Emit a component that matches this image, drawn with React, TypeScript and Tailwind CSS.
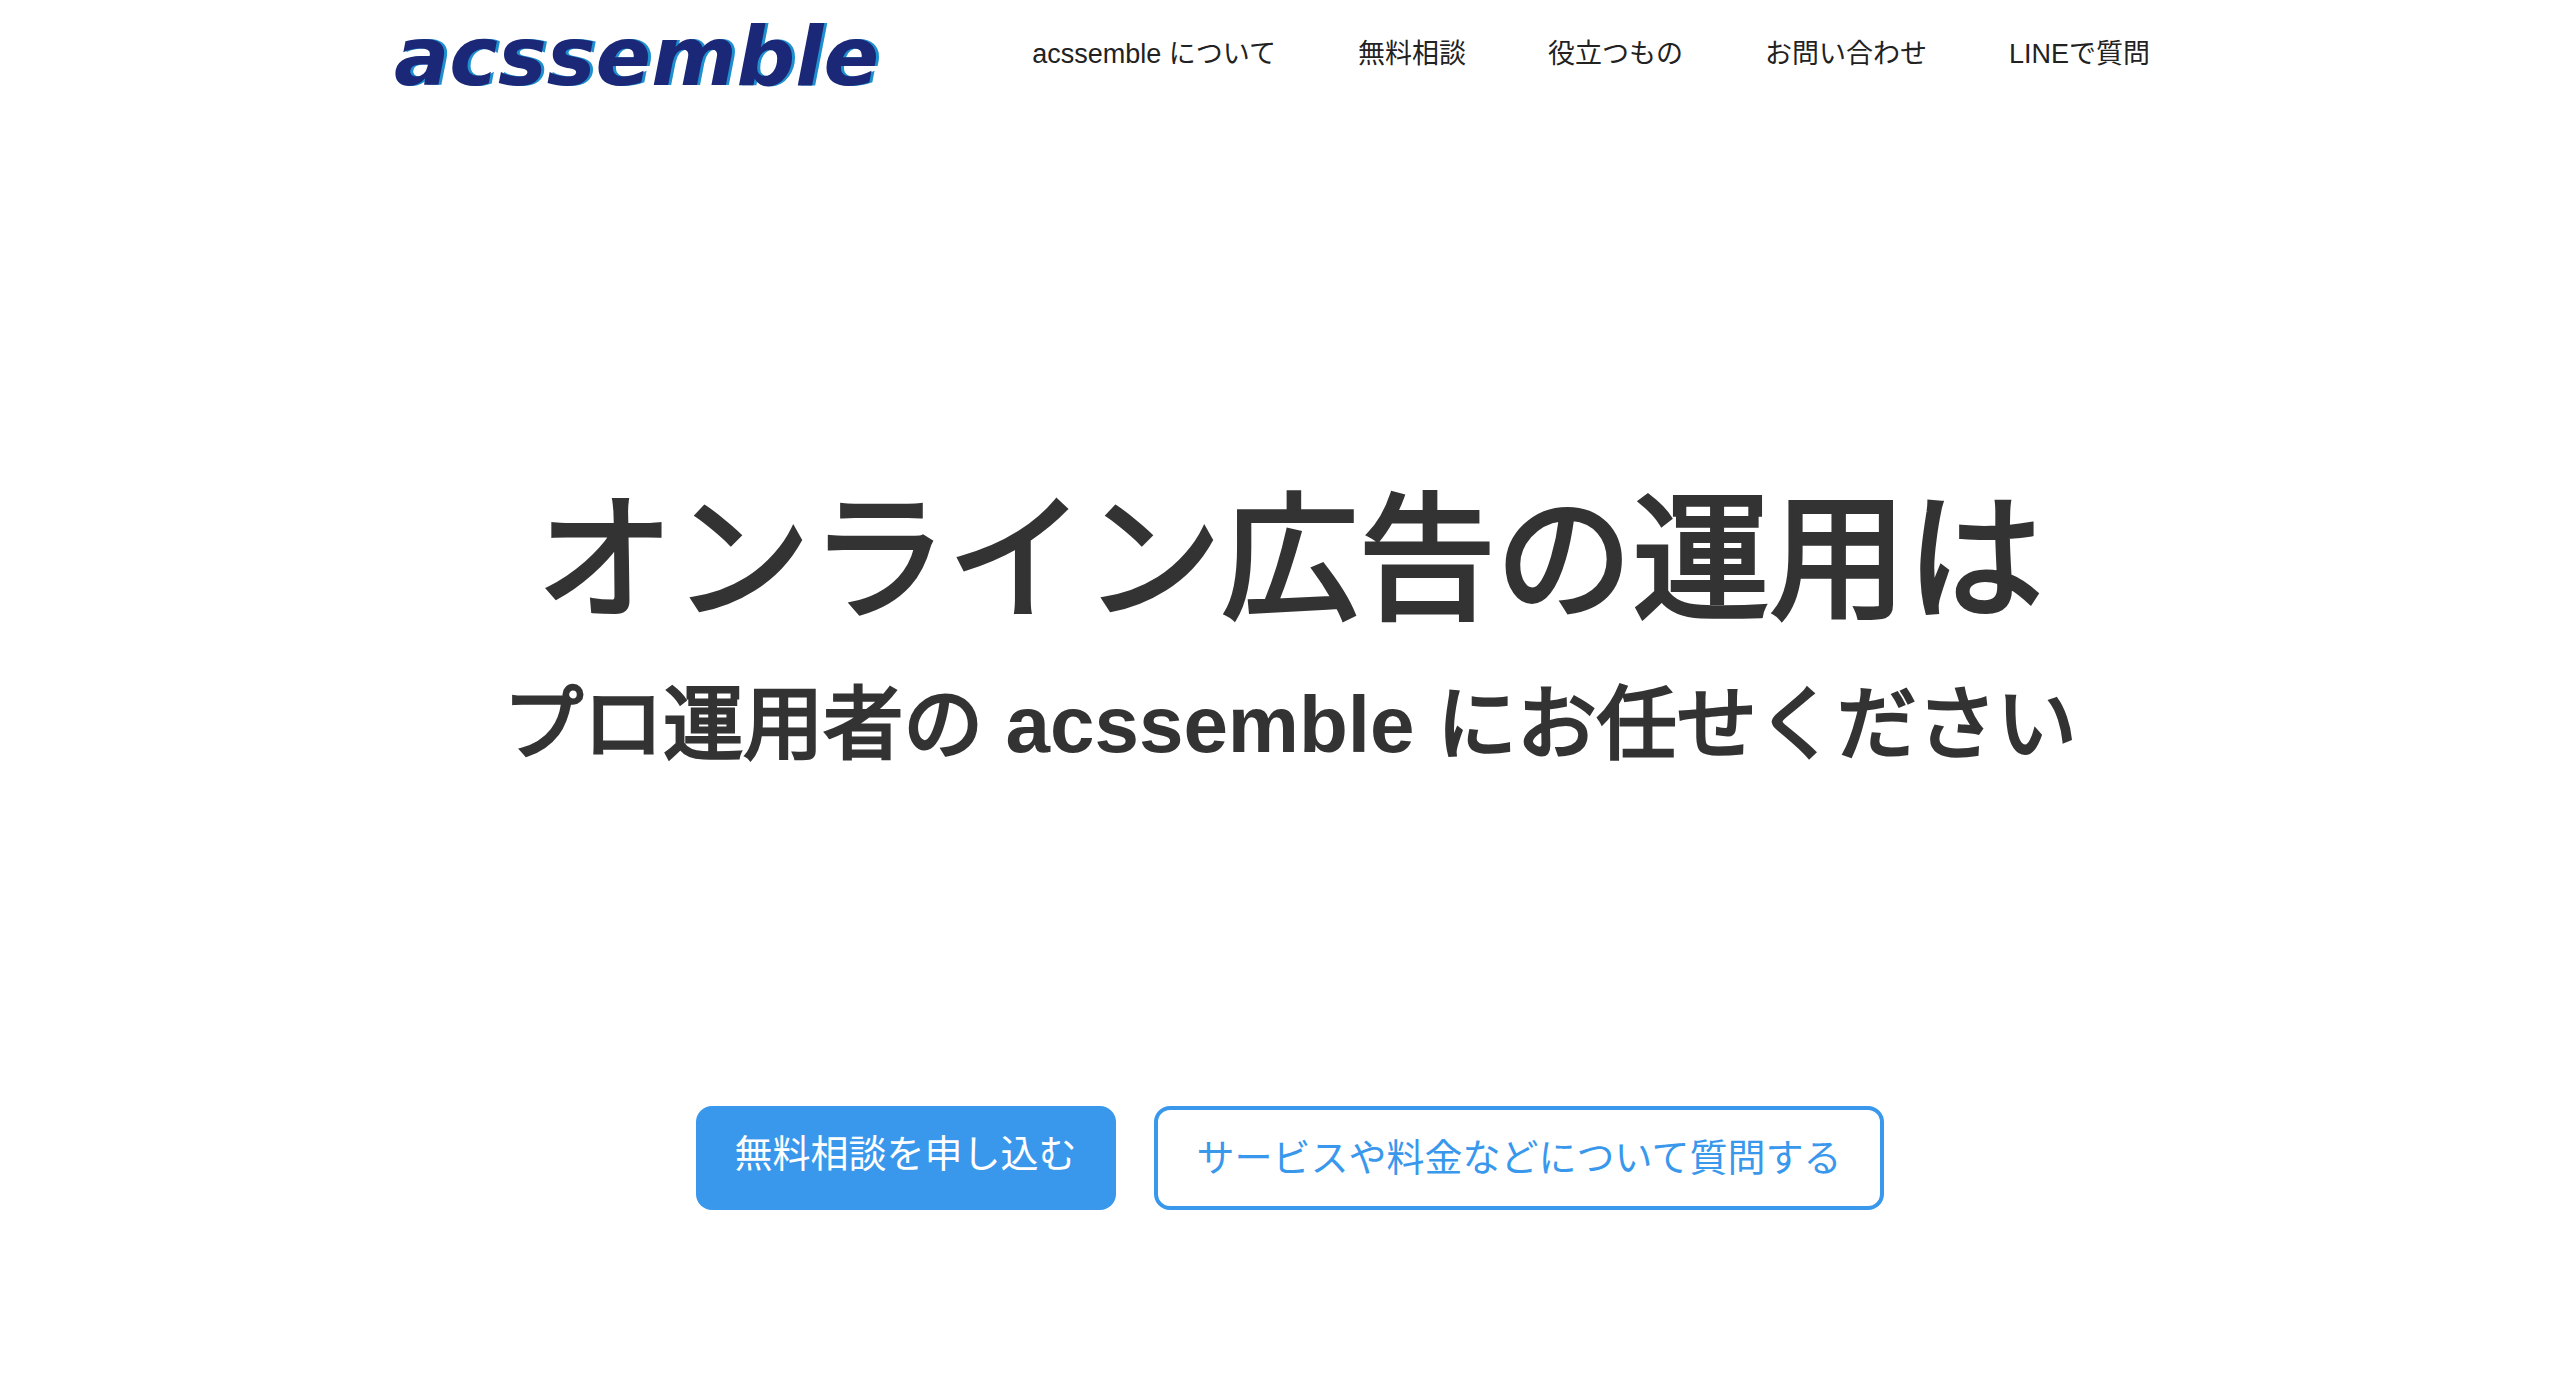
const navItems = ["acssemble について", "無料相談", "役立つもの", "お問い合わせ", "LINEで質問"];

export default function App() {
  return (
    <div className="min-h-screen bg-white font-['Liberation_Sans','Noto_Sans_CJK_JP',sans-serif] text-[#333333]">
      <header className="mx-auto flex w-full max-w-[1820px] items-center justify-between px-6 pr-10">
        <a
          href="#top"
          className="pt-1.5 font-['DejaVu_Sans',sans-serif] text-[82px] leading-[102px] font-bold text-[#1b2877] italic [text-shadow:3px_0_0_#1e90d0]"
        >
          acssemble
        </a>
        <nav aria-label="メイン">
          <ul className="flex gap-[82px] text-[27px] leading-[40px] whitespace-nowrap text-[#222222]">
            {navItems.map((item) => (
              <li key={item}>
                <a href="#menu">{item}</a>
              </li>
            ))}
          </ul>
        </nav>
      </header>
      <main id="top" className="flex flex-col items-center pt-[353px] pl-5">
        <h1 className="text-[137px] leading-[200px] font-normal whitespace-nowrap [-webkit-text-stroke:4px_#333333]">
          オンライン広告の運用は
        </h1>
        <h2 className="mt-1 text-[80px] leading-[120px] font-normal whitespace-nowrap [-webkit-text-stroke:3px_#333333]">
          プロ運用者の <span className="font-bold [-webkit-text-stroke:0px]">acssemble</span> にお任せください
        </h2>
        <div className="mt-[321px] flex gap-[38px] text-[38px] leading-[56px] whitespace-nowrap">
          <a href="#consult" className="rounded-2xl bg-[#3998ec] px-[39px] pt-5 pb-7 text-white">
            無料相談を申し込む
          </a>
          <a href="#question" className="rounded-2xl border-4 border-[#3998ec] px-[39px] py-5 text-[#3998ec]">
            サービスや料金などについて質問する
          </a>
        </div>
      </main>
    </div>
  );
}
